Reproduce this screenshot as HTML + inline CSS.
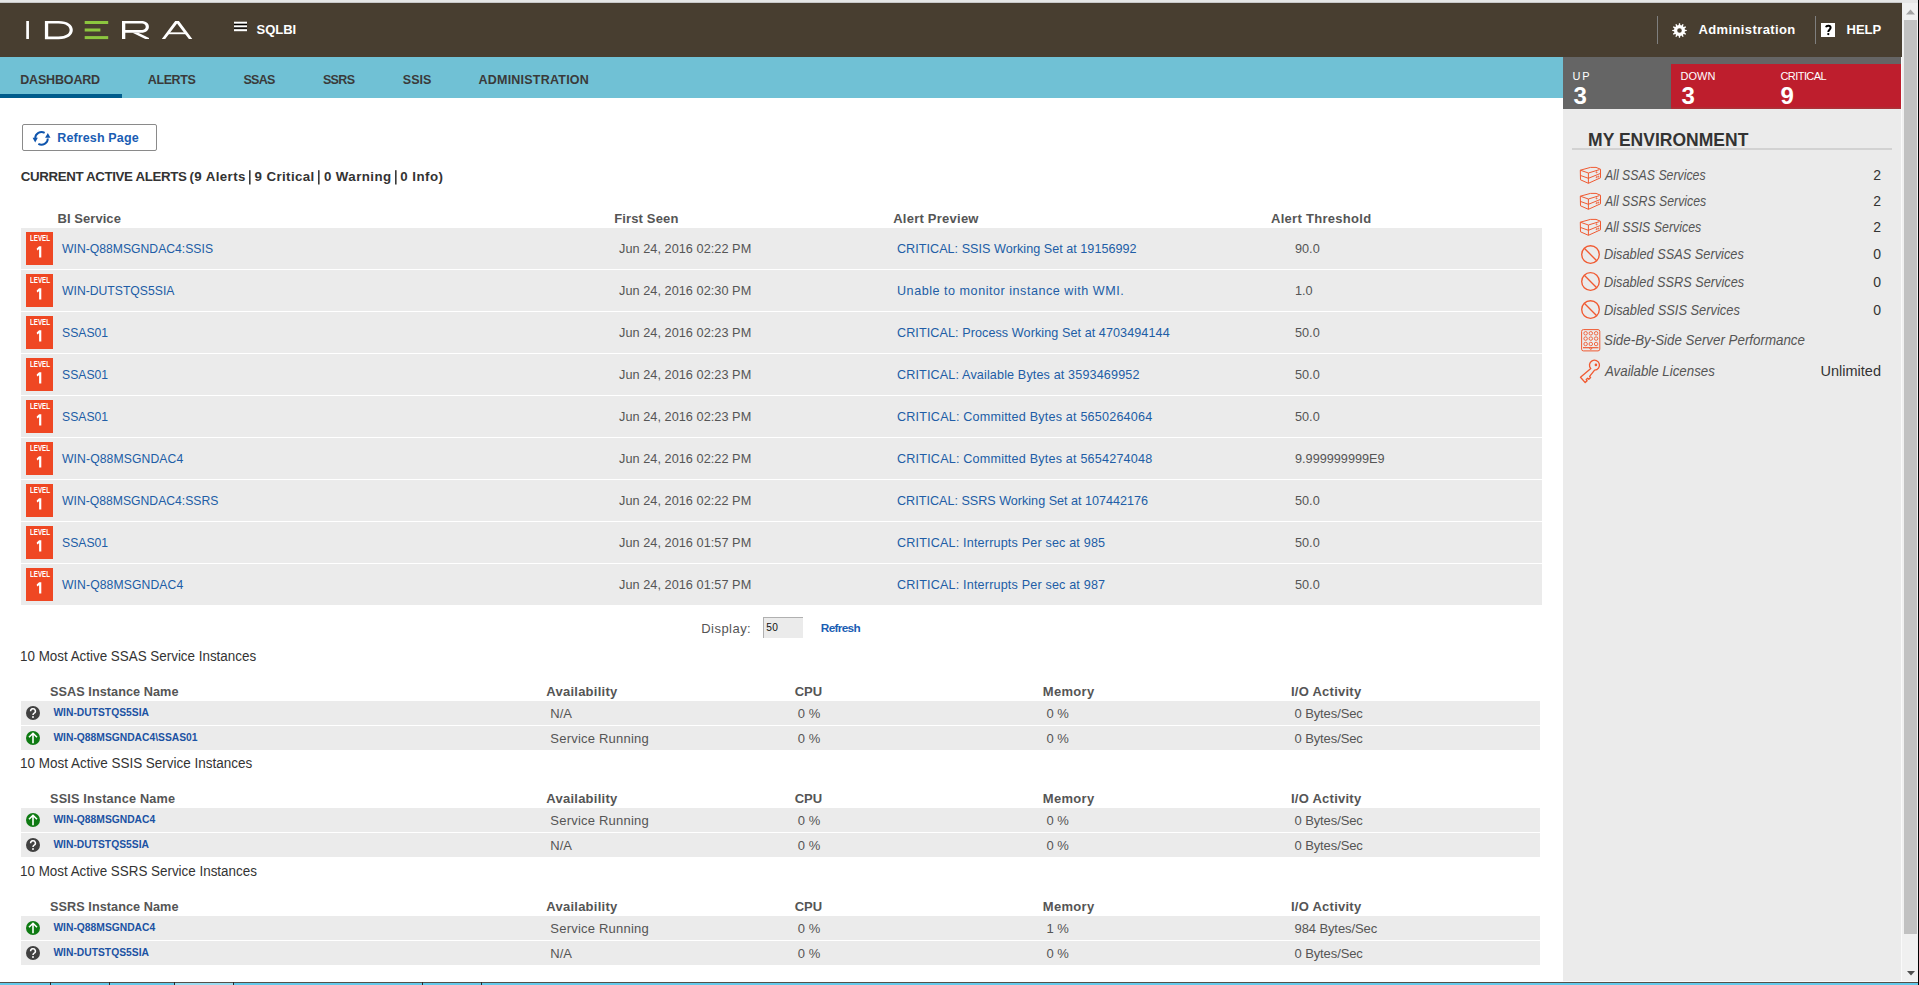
<!DOCTYPE html><html><head><meta charset="utf-8"><style>
html,body{margin:0;padding:0;width:1919px;height:985px;overflow:hidden;background:#fff;font-family:"Liberation Sans",sans-serif;}
.t{position:absolute;white-space:nowrap;line-height:1;}
.r{position:absolute;}
svg{position:absolute;}
</style></head><body>
<div class="r" style="left:0px;top:0px;width:1919px;height:3px;background:#e6e6e6;"></div>
<div class="r" style="left:0px;top:2px;width:1902px;height:1px;background:#c8c8c8;"></div>
<div class="r" style="left:0px;top:3px;width:1902px;height:54px;background:#483e30;"></div>
<svg style="left:20px;top:15px" width="180" height="30" viewBox="20 15 180 30">
<g fill="none" stroke="#fff" stroke-width="2.7">
<line x1="27.6" y1="21" x2="27.6" y2="39"/>
</g>
<path fill="#fff" fill-rule="evenodd" d="M44.9 21 H58.5 C68 21 72.8 25 72.8 30.05 C72.8 35.1 68 39.15 58.5 39.15 H44.9 Z M48.2 23.55 H58.5 C66 23.55 69.6 26.4 69.6 30.05 C69.6 33.7 66 36.5 58.5 36.5 H48.2 Z"/>
<path fill="#fff" fill-rule="evenodd" d="M122 21 H141 C146.5 21 148.9 23.5 148.9 26.8 C148.9 30.1 146.5 32.8 141 32.8 H125.3 V39.1 H122 Z M125.3 23.6 H141 C144.5 23.6 145.7 25 145.7 26.8 C145.7 28.6 144.5 30.1 141 30.1 H125.3 Z"/>
<path fill="#fff" d="M132.5 32.7 L138.3 32.7 L149 37.9 L149 39.1 L145.3 39.1 Z"/>
<path fill="#fff" d="M161.8 39.1 L175.2 21 L178.9 21 L192.3 39.1 L188.9 39.1 L177.05 23.4 L165.2 39.1 Z"/>
<rect fill="#fff" x="168" y="32.35" width="18" height="1.85"/>
<g fill="#8cc63f">
<rect x="84.7" y="21" width="23.5" height="3"/>
<rect x="84.7" y="28.5" width="15.7" height="3"/>
<rect x="84.7" y="36.1" width="23.5" height="3"/>
</g>
</svg>
<svg style="left:234px;top:20px" width="13" height="13" viewBox="0 20 13 13"><rect x="0" y="21.7" width="13" height="2.1" fill="#fff"/><rect x="0" y="23.8" width="13" height="1.2" fill="#000"/><rect x="0" y="25.4" width="13" height="2.1" fill="#fff"/><rect x="0" y="27.5" width="13" height="1.2" fill="#000"/><rect x="0" y="29.2" width="13" height="2" fill="#fff"/></svg>
<div class="t" style="left:256.50px;top:23.00px;font-size:13px;color:#fff;font-weight:bold;font-style:normal;letter-spacing:0.000px;">SQLBI</div>
<div class="r" style="left:1657px;top:16px;width:1px;height:28px;background:#7f7f7f;"></div>
<div class="r" style="left:1815px;top:16px;width:1px;height:28px;background:#7f7f7f;"></div>
<svg style="left:1672px;top:22.5px" width="15" height="15" viewBox="0 0 15 15"><path fill="#fff" fill-rule="evenodd" d="M12.94 6.68 L14.78 6.91 L14.78 8.09 L12.94 8.32 L12.62 9.51 L14.10 10.63 L13.51 11.65 L11.80 10.93 L10.93 11.80 L11.65 13.51 L10.63 14.10 L9.51 12.62 L8.32 12.94 L8.09 14.78 L6.91 14.78 L6.68 12.94 L5.49 12.62 L4.37 14.10 L3.35 13.51 L4.07 11.80 L3.20 10.93 L1.49 11.65 L0.90 10.63 L2.38 9.51 L2.06 8.32 L0.22 8.09 L0.22 6.91 L2.06 6.68 L2.38 5.49 L0.90 4.37 L1.49 3.35 L3.20 4.07 L4.07 3.20 L3.35 1.49 L4.37 0.90 L5.49 2.38 L6.68 2.06 L6.91 0.22 L8.09 0.22 L8.32 2.06 L9.51 2.38 L10.63 0.90 L11.65 1.49 L10.93 3.20 L11.80 4.07 L13.51 3.35 L14.10 4.37 L12.62 5.49Z M9.80 7.5 A2.3 2.3 0 1 0 5.20 7.5 A2.3 2.3 0 1 0 9.80 7.5Z"/></svg>
<div class="t" style="left:1698.50px;top:23.00px;font-size:13px;color:#fff;font-weight:bold;font-style:normal;letter-spacing:0.385px;">Administration</div>
<div class="r" style="left:1821px;top:23px;width:14px;height:14px;background:#fff;"></div>
<svg style="left:1821px;top:23px" width="14" height="14" viewBox="0 0 14 14"><path d="M5 4.3 C5.4 2.3 9.6 2.2 9.6 4.7 C9.6 6.6 7.3 6.9 7.3 8.9" fill="none" stroke="#000" stroke-width="2"/><circle cx="7.3" cy="11.1" r="1.15" fill="#000"/></svg>
<div class="t" style="left:1846.50px;top:23.00px;font-size:13px;color:#fff;font-weight:bold;font-style:normal;letter-spacing:0.000px;">HELP</div>
<div class="r" style="left:0px;top:57px;width:1563px;height:41px;background:#70c1d5;"></div>
<div class="r" style="left:0px;top:94px;width:122px;height:4px;background:#005c8c;"></div>
<div class="t" style="left:20.20px;top:74.42px;font-size:12.5px;color:#3a3a3a;font-weight:bold;font-style:normal;letter-spacing:-0.162px;">DASHBOARD</div>
<div class="t" style="left:147.80px;top:74.42px;font-size:12.5px;color:#3a3a3a;font-weight:bold;font-style:normal;letter-spacing:-0.400px;">ALERTS</div>
<div class="t" style="left:243.40px;top:74.42px;font-size:12.5px;color:#3a3a3a;font-weight:bold;font-style:normal;letter-spacing:-0.667px;">SSAS</div>
<div class="t" style="left:322.90px;top:74.42px;font-size:12.5px;color:#3a3a3a;font-weight:bold;font-style:normal;letter-spacing:-0.633px;">SSRS</div>
<div class="t" style="left:402.80px;top:74.42px;font-size:12.5px;color:#3a3a3a;font-weight:bold;font-style:normal;letter-spacing:0.033px;">SSIS</div>
<div class="t" style="left:478.50px;top:74.42px;font-size:12.5px;color:#3a3a3a;font-weight:bold;font-style:normal;letter-spacing:0.223px;">ADMINISTRATION</div>
<div class="r" style="left:1563px;top:57px;width:338px;height:924px;background:#ebebeb;"></div>
<div class="r" style="left:1901px;top:57px;width:1px;height:924px;background:#fafafa;"></div>
<div class="r" style="left:1563px;top:981px;width:355px;height:1px;background:#fafafa;"></div>
<div class="r" style="left:1563px;top:57px;width:338px;height:52px;background:#656565;"></div>
<div class="r" style="left:1671px;top:64px;width:230px;height:45px;background:#be1e2d;"></div>
<div class="r" style="left:1671px;top:107px;width:230px;height:2px;background:linear-gradient(#b5262f,#a8353c);"></div>
<div class="t" style="left:1572.50px;top:70.69px;font-size:11px;color:#fff;font-weight:normal;font-style:normal;letter-spacing:1.750px;">UP</div>
<div class="t" style="left:1680.50px;top:70.69px;font-size:11px;color:#fff;font-weight:normal;font-style:normal;letter-spacing:0.000px;">DOWN</div>
<div class="t" style="left:1780.50px;top:70.69px;font-size:11px;color:#fff;font-weight:normal;font-style:normal;letter-spacing:-0.571px;">CRITICAL</div>
<div class="t" style="left:1573.5px;top:83.68px;font-size:24px;color:#fff;font-weight:bold;font-style:normal;letter-spacing:0px;">3</div>
<div class="t" style="left:1681.5px;top:83.68px;font-size:24px;color:#fff;font-weight:bold;font-style:normal;letter-spacing:0px;">3</div>
<div class="t" style="left:1780.5px;top:83.68px;font-size:24px;color:#fff;font-weight:bold;font-style:normal;letter-spacing:0px;">9</div>
<div class="t" style="left:1588.10px;top:132.19px;font-size:17.5px;color:#333;font-weight:bold;font-style:normal;letter-spacing:0.015px;">MY ENVIRONMENT</div>
<div class="r" style="left:1572px;top:148px;width:320px;height:2px;background:#d2d2d2;"></div>
<div class="t" style="left:1605.34px;top:168.15px;font-size:14px;color:#555;font-weight:normal;font-style:italic;transform:scaleX(0.8798);transform-origin:0 0;">All SSAS Services</div>
<div class="t" style="right:38px;top:168.15px;font-size:14px;color:#333">2</div>
<svg style="left:1576px;top:162px" width="30" height="26" viewBox="0 0 30 26"><g fill="none" stroke="#f05a32" stroke-width="1" stroke-linejoin="round">
<path d="M4.3 8.2 L14.5 5.4 L20 5.4 L24.5 7.2 L24.5 15.8 L12.4 21.3 L4.5 17.8 Z"/><path d="M4.3 8.2 L12.4 11 L23.5 7.6"/><path d="M12.4 11 V21.3"/><path d="M4.3 13.4 L12.4 16.3 L24.5 11.4"/>
<circle cx="20.6" cy="10.3" r=".5"/><circle cx="20.6" cy="15.2" r=".5"/><circle cx="22.3" cy="14.6" r=".5"/></g></svg>
<div class="t" style="left:1605.34px;top:194.15px;font-size:14px;color:#555;font-weight:normal;font-style:italic;transform:scaleX(0.8791);transform-origin:0 0;">All SSRS Services</div>
<div class="t" style="right:38px;top:194.15px;font-size:14px;color:#333">2</div>
<svg style="left:1576px;top:188px" width="30" height="26" viewBox="0 0 30 26"><g fill="none" stroke="#f05a32" stroke-width="1" stroke-linejoin="round">
<path d="M4.3 8.2 L14.5 5.4 L20 5.4 L24.5 7.2 L24.5 15.8 L12.4 21.3 L4.5 17.8 Z"/><path d="M4.3 8.2 L12.4 11 L23.5 7.6"/><path d="M12.4 11 V21.3"/><path d="M4.3 13.4 L12.4 16.3 L24.5 11.4"/>
<circle cx="20.6" cy="10.3" r=".5"/><circle cx="20.6" cy="15.2" r=".5"/><circle cx="22.3" cy="14.6" r=".5"/></g></svg>
<div class="t" style="left:1605.34px;top:220.15px;font-size:14px;color:#555;font-weight:normal;font-style:italic;transform:scaleX(0.8835);transform-origin:0 0;">All SSIS Services</div>
<div class="t" style="right:38px;top:220.15px;font-size:14px;color:#333">2</div>
<svg style="left:1576px;top:214px" width="30" height="26" viewBox="0 0 30 26"><g fill="none" stroke="#f05a32" stroke-width="1" stroke-linejoin="round">
<path d="M4.3 8.2 L14.5 5.4 L20 5.4 L24.5 7.2 L24.5 15.8 L12.4 21.3 L4.5 17.8 Z"/><path d="M4.3 8.2 L12.4 11 L23.5 7.6"/><path d="M12.4 11 V21.3"/><path d="M4.3 13.4 L12.4 16.3 L24.5 11.4"/>
<circle cx="20.6" cy="10.3" r=".5"/><circle cx="20.6" cy="15.2" r=".5"/><circle cx="22.3" cy="14.6" r=".5"/></g></svg>
<div class="t" style="left:1604.44px;top:247.15px;font-size:14px;color:#555;font-weight:normal;font-style:italic;transform:scaleX(0.9118);transform-origin:0 0;">Disabled SSAS Services</div>
<div class="t" style="right:38px;top:247.15px;font-size:14px;color:#333">0</div>
<svg style="left:1581px;top:244.5px" width="19" height="19" viewBox="0 0 19 19"><g fill="none" stroke="#f05a32" stroke-width="1.35"><circle cx="9.5" cy="9.5" r="8.8"/><line x1="3.3" y1="3.3" x2="15.7" y2="15.7"/></g></svg>
<div class="t" style="left:1604.45px;top:274.65px;font-size:14px;color:#555;font-weight:normal;font-style:italic;transform:scaleX(0.9092);transform-origin:0 0;">Disabled SSRS Services</div>
<div class="t" style="right:38px;top:274.65px;font-size:14px;color:#333">0</div>
<svg style="left:1581px;top:272.0px" width="19" height="19" viewBox="0 0 19 19"><g fill="none" stroke="#f05a32" stroke-width="1.35"><circle cx="9.5" cy="9.5" r="8.8"/><line x1="3.3" y1="3.3" x2="15.7" y2="15.7"/></g></svg>
<div class="t" style="left:1604.44px;top:302.65px;font-size:14px;color:#555;font-weight:normal;font-style:italic;transform:scaleX(0.9190);transform-origin:0 0;">Disabled SSIS Services</div>
<div class="t" style="right:38px;top:302.65px;font-size:14px;color:#333">0</div>
<svg style="left:1581px;top:300.0px" width="19" height="19" viewBox="0 0 19 19"><g fill="none" stroke="#f05a32" stroke-width="1.35"><circle cx="9.5" cy="9.5" r="8.8"/><line x1="3.3" y1="3.3" x2="15.7" y2="15.7"/></g></svg>
<div class="t" style="left:1604.42px;top:332.65px;font-size:14px;color:#555;font-weight:normal;font-style:italic;transform:scaleX(0.9529);transform-origin:0 0;">Side-By-Side Server Performance</div>
<svg style="left:1581px;top:328.5px" width="20" height="23" viewBox="0 0 20 23"><g fill="none" stroke="#f05a32" stroke-width="1"><rect x="0.6" y="0.6" width="18.2" height="21.3" rx="1.8"/><g stroke-width="0.9"><circle cx="4.6" cy="4.3" r="1.75"/><circle cx="4.6" cy="9.6" r="1.75"/><circle cx="4.6" cy="15.0" r="1.75"/><circle cx="9.8" cy="4.3" r="1.75"/><circle cx="9.8" cy="9.6" r="1.75"/><circle cx="9.8" cy="15.0" r="1.75"/><circle cx="15.1" cy="4.3" r="1.75"/><circle cx="15.1" cy="9.6" r="1.75"/><circle cx="15.1" cy="15.0" r="1.75"/></g><line x1="2" y1="18.7" x2="17.5" y2="18.7" stroke-width="1.2"/><path d="M8.3 18.8 L9.8 20.6 L11.3 18.8"/></g></svg>
<div class="t" style="left:1605.37px;top:363.65px;font-size:14px;color:#555;font-weight:normal;font-style:italic;transform:scaleX(0.9491);transform-origin:0 0;">Available Licenses</div>
<div class="t" style="right:38px;top:364.23px;font-size:14.5px;color:#333">Unlimited</div>
<svg style="left:1576px;top:355.0px" width="26" height="30" viewBox="0 0 26 30"><g fill="none" stroke="#f05a32" stroke-width="1.35" stroke-linejoin="round">
<path d="M14.8 13.6 A5 5 0 1 1 18.6 15.2 L13.6 21.4 L14.6 22.6 L12.8 24.3 L11.7 23.3 L10.2 24.6 L11.1 25.7 L9.2 27.6 L4.5 22.3 Z"/>
</g><circle cx="19.9" cy="9.9" r="1.3" fill="#f05a32"/></svg>
<div class="r" style="left:1902px;top:3px;width:16px;height:978px;background:#f0f0f0;"></div>
<div class="r" style="left:1918px;top:0px;width:1px;height:985px;background:#000;"></div>
<div class="r" style="left:1904px;top:20px;width:13px;height:914px;background:#c1c1c1;"></div>
<svg style="left:1906px;top:9px" width="9" height="6" viewBox="0 0 9 6"><path d="M0 5.5 L4.5 0.5 L9 5.5Z" fill="#a3a3a3"/></svg>
<svg style="left:1906.5px;top:971px" width="8" height="5" viewBox="0 0 8 5"><path d="M0 0 L4 4.5 L8 0Z" fill="#505050"/></svg>
<div class="r" style="left:22px;top:124px;width:133px;height:25px;border:1px solid #8a8a8a;border-radius:2px;background:#fff"></div>
<svg style="left:28px;top:126px" width="26" height="24" viewBox="0 0 26 24"><g fill="none" stroke="#0f55ad" stroke-width="1.9">
<path d="M7.2 12.4 A6.3 6.3 0 0 1 16.65 6.94"/><path d="M19.8 12.4 A6.3 6.3 0 0 1 10.35 17.86"/></g>
<path d="M4.6 11.8 L9.8 11.8 L7.2 16.5 Z" fill="#0f55ad"/><path d="M17.1 11.8 L22.5 11.8 L19.8 6.9 Z" fill="#0f55ad"/></svg>
<div class="t" style="left:57.25px;top:131.92px;font-size:12.5px;color:#1a5db3;font-weight:bold;font-style:normal;letter-spacing:0.132px;">Refresh Page</div>
<div class="t" style="left:20.80px;top:169.74px;font-size:13.3px;color:#333;font-weight:bold;font-style:normal;letter-spacing:-0.370px;">CURRENT ACTIVE ALERTS</div>
<div class="t" style="left:189.40px;top:169.74px;font-size:13.3px;color:#333;font-weight:bold;font-style:normal;letter-spacing:0.412px;">(9 Alerts</div>
<div class="t" style="left:254.50px;top:169.74px;font-size:13.3px;color:#333;font-weight:bold;font-style:normal;letter-spacing:0.400px;">9 Critical</div>
<div class="t" style="left:323.90px;top:169.74px;font-size:13.3px;color:#333;font-weight:bold;font-style:normal;letter-spacing:0.425px;">0 Warning</div>
<div class="t" style="left:400.20px;top:169.74px;font-size:13.3px;color:#333;font-weight:bold;font-style:normal;letter-spacing:0.483px;">0 Info)</div>
<svg style="left:248px;top:169px" width="4" height="17"><rect x="1" y="1.2" width="1.6" height="14.3" fill="#3a3a3a"/></svg>
<svg style="left:317px;top:169px" width="4" height="17"><rect x="1" y="1.2" width="1.6" height="14.3" fill="#3a3a3a"/></svg>
<svg style="left:393.5px;top:169px" width="4" height="17"><rect x="1" y="1.2" width="1.6" height="14.3" fill="#3a3a3a"/></svg>
<div class="t" style="left:57.50px;top:212.00px;font-size:13px;color:#555;font-weight:bold;font-style:normal;letter-spacing:0.056px;">BI Service</div>
<div class="t" style="left:614.20px;top:212.00px;font-size:13px;color:#555;font-weight:bold;font-style:normal;letter-spacing:0.144px;">First Seen</div>
<div class="t" style="left:893.20px;top:212.00px;font-size:13px;color:#555;font-weight:bold;font-style:normal;letter-spacing:0.242px;">Alert Preview</div>
<div class="t" style="left:1271.00px;top:212.00px;font-size:13px;color:#555;font-weight:bold;font-style:normal;letter-spacing:0.286px;">Alert Threshold</div>
<div class="r" style="left:21px;top:228px;width:1521px;height:41px;background:#ebebeb;"></div>
<div class="r" style="left:26px;top:232px;width:27px;height:33px;background:#ef4723;"></div>
<div class="t" style="left:30px;top:234.00px;font-size:8.5px;color:#fff;font-weight:bold;font-style:normal;letter-spacing:0px;transform:scaleX(0.73);transform-origin:0 0;">LEVEL</div>
<svg style="left:34px;top:244px" width="10" height="14" viewBox="0 0 10 14"><path fill="#fff" d="M5.1 2.2 H7.3 V13.6 H5.1 V5.2 L3.1 6.6 L2.7 4.6 Z"/></svg>
<div class="t" style="left:62px;top:242.97px;font-size:12.2px;color:#215da6;font-weight:normal;font-style:normal;letter-spacing:0px;">WIN-Q88MSGNDAC4:SSIS</div>
<div class="t" style="left:619px;top:242.55px;font-size:12.7px;color:#555;font-weight:normal;font-style:normal;letter-spacing:0.05px;">Jun 24, 2016 02:22 PM</div>
<div class="t" style="left:897px;top:242.63px;font-size:12.6px;color:#215da6;font-weight:normal;font-style:normal;letter-spacing:0.03px;">CRITICAL: SSIS Working Set at 19156992</div>
<div class="t" style="left:1295px;top:242.55px;font-size:12.7px;color:#555;font-weight:normal;font-style:normal;letter-spacing:0px;">90.0</div>
<div class="r" style="left:21px;top:270px;width:1521px;height:41px;background:#ebebeb;"></div>
<div class="r" style="left:26px;top:274px;width:27px;height:33px;background:#ef4723;"></div>
<div class="t" style="left:30px;top:276.00px;font-size:8.5px;color:#fff;font-weight:bold;font-style:normal;letter-spacing:0px;transform:scaleX(0.73);transform-origin:0 0;">LEVEL</div>
<svg style="left:34px;top:286px" width="10" height="14" viewBox="0 0 10 14"><path fill="#fff" d="M5.1 2.2 H7.3 V13.6 H5.1 V5.2 L3.1 6.6 L2.7 4.6 Z"/></svg>
<div class="t" style="left:62px;top:284.97px;font-size:12.2px;color:#215da6;font-weight:normal;font-style:normal;letter-spacing:0px;">WIN-DUTSTQS5SIA</div>
<div class="t" style="left:619px;top:284.55px;font-size:12.7px;color:#555;font-weight:normal;font-style:normal;letter-spacing:0.05px;">Jun 24, 2016 02:30 PM</div>
<div class="t" style="left:897px;top:284.63px;font-size:12.6px;color:#215da6;font-weight:normal;font-style:normal;letter-spacing:0.52px;">Unable to monitor instance with WMI.</div>
<div class="t" style="left:1295px;top:284.55px;font-size:12.7px;color:#555;font-weight:normal;font-style:normal;letter-spacing:0px;">1.0</div>
<div class="r" style="left:21px;top:312px;width:1521px;height:41px;background:#ebebeb;"></div>
<div class="r" style="left:26px;top:316px;width:27px;height:33px;background:#ef4723;"></div>
<div class="t" style="left:30px;top:318.00px;font-size:8.5px;color:#fff;font-weight:bold;font-style:normal;letter-spacing:0px;transform:scaleX(0.73);transform-origin:0 0;">LEVEL</div>
<svg style="left:34px;top:328px" width="10" height="14" viewBox="0 0 10 14"><path fill="#fff" d="M5.1 2.2 H7.3 V13.6 H5.1 V5.2 L3.1 6.6 L2.7 4.6 Z"/></svg>
<div class="t" style="left:62px;top:326.97px;font-size:12.2px;color:#215da6;font-weight:normal;font-style:normal;letter-spacing:0px;">SSAS01</div>
<div class="t" style="left:619px;top:326.55px;font-size:12.7px;color:#555;font-weight:normal;font-style:normal;letter-spacing:0.05px;">Jun 24, 2016 02:23 PM</div>
<div class="t" style="left:897px;top:326.63px;font-size:12.6px;color:#215da6;font-weight:normal;font-style:normal;letter-spacing:0.08px;">CRITICAL: Process Working Set at 4703494144</div>
<div class="t" style="left:1295px;top:326.55px;font-size:12.7px;color:#555;font-weight:normal;font-style:normal;letter-spacing:0px;">50.0</div>
<div class="r" style="left:21px;top:354px;width:1521px;height:41px;background:#ebebeb;"></div>
<div class="r" style="left:26px;top:358px;width:27px;height:33px;background:#ef4723;"></div>
<div class="t" style="left:30px;top:360.00px;font-size:8.5px;color:#fff;font-weight:bold;font-style:normal;letter-spacing:0px;transform:scaleX(0.73);transform-origin:0 0;">LEVEL</div>
<svg style="left:34px;top:370px" width="10" height="14" viewBox="0 0 10 14"><path fill="#fff" d="M5.1 2.2 H7.3 V13.6 H5.1 V5.2 L3.1 6.6 L2.7 4.6 Z"/></svg>
<div class="t" style="left:62px;top:368.97px;font-size:12.2px;color:#215da6;font-weight:normal;font-style:normal;letter-spacing:0px;">SSAS01</div>
<div class="t" style="left:619px;top:368.55px;font-size:12.7px;color:#555;font-weight:normal;font-style:normal;letter-spacing:0.05px;">Jun 24, 2016 02:23 PM</div>
<div class="t" style="left:897px;top:368.63px;font-size:12.6px;color:#215da6;font-weight:normal;font-style:normal;letter-spacing:0.14px;">CRITICAL: Available Bytes at 3593469952</div>
<div class="t" style="left:1295px;top:368.55px;font-size:12.7px;color:#555;font-weight:normal;font-style:normal;letter-spacing:0px;">50.0</div>
<div class="r" style="left:21px;top:396px;width:1521px;height:41px;background:#ebebeb;"></div>
<div class="r" style="left:26px;top:400px;width:27px;height:33px;background:#ef4723;"></div>
<div class="t" style="left:30px;top:402.00px;font-size:8.5px;color:#fff;font-weight:bold;font-style:normal;letter-spacing:0px;transform:scaleX(0.73);transform-origin:0 0;">LEVEL</div>
<svg style="left:34px;top:412px" width="10" height="14" viewBox="0 0 10 14"><path fill="#fff" d="M5.1 2.2 H7.3 V13.6 H5.1 V5.2 L3.1 6.6 L2.7 4.6 Z"/></svg>
<div class="t" style="left:62px;top:410.97px;font-size:12.2px;color:#215da6;font-weight:normal;font-style:normal;letter-spacing:0px;">SSAS01</div>
<div class="t" style="left:619px;top:410.55px;font-size:12.7px;color:#555;font-weight:normal;font-style:normal;letter-spacing:0.05px;">Jun 24, 2016 02:23 PM</div>
<div class="t" style="left:897px;top:410.63px;font-size:12.6px;color:#215da6;font-weight:normal;font-style:normal;letter-spacing:0.195px;">CRITICAL: Committed Bytes at 5650264064</div>
<div class="t" style="left:1295px;top:410.55px;font-size:12.7px;color:#555;font-weight:normal;font-style:normal;letter-spacing:0px;">50.0</div>
<div class="r" style="left:21px;top:438px;width:1521px;height:41px;background:#ebebeb;"></div>
<div class="r" style="left:26px;top:442px;width:27px;height:33px;background:#ef4723;"></div>
<div class="t" style="left:30px;top:444.00px;font-size:8.5px;color:#fff;font-weight:bold;font-style:normal;letter-spacing:0px;transform:scaleX(0.73);transform-origin:0 0;">LEVEL</div>
<svg style="left:34px;top:454px" width="10" height="14" viewBox="0 0 10 14"><path fill="#fff" d="M5.1 2.2 H7.3 V13.6 H5.1 V5.2 L3.1 6.6 L2.7 4.6 Z"/></svg>
<div class="t" style="left:62px;top:452.97px;font-size:12.2px;color:#215da6;font-weight:normal;font-style:normal;letter-spacing:0.1px;">WIN-Q88MSGNDAC4</div>
<div class="t" style="left:619px;top:452.55px;font-size:12.7px;color:#555;font-weight:normal;font-style:normal;letter-spacing:0.05px;">Jun 24, 2016 02:22 PM</div>
<div class="t" style="left:897px;top:452.63px;font-size:12.6px;color:#215da6;font-weight:normal;font-style:normal;letter-spacing:0.195px;">CRITICAL: Committed Bytes at 5654274048</div>
<div class="t" style="left:1295px;top:452.55px;font-size:12.7px;color:#555;font-weight:normal;font-style:normal;letter-spacing:0px;">9.999999999E9</div>
<div class="r" style="left:21px;top:480px;width:1521px;height:41px;background:#ebebeb;"></div>
<div class="r" style="left:26px;top:484px;width:27px;height:33px;background:#ef4723;"></div>
<div class="t" style="left:30px;top:486.00px;font-size:8.5px;color:#fff;font-weight:bold;font-style:normal;letter-spacing:0px;transform:scaleX(0.73);transform-origin:0 0;">LEVEL</div>
<svg style="left:34px;top:496px" width="10" height="14" viewBox="0 0 10 14"><path fill="#fff" d="M5.1 2.2 H7.3 V13.6 H5.1 V5.2 L3.1 6.6 L2.7 4.6 Z"/></svg>
<div class="t" style="left:62px;top:494.97px;font-size:12.2px;color:#215da6;font-weight:normal;font-style:normal;letter-spacing:0px;">WIN-Q88MSGNDAC4:SSRS</div>
<div class="t" style="left:619px;top:494.55px;font-size:12.7px;color:#555;font-weight:normal;font-style:normal;letter-spacing:0.05px;">Jun 24, 2016 02:22 PM</div>
<div class="t" style="left:897px;top:494.63px;font-size:12.6px;color:#215da6;font-weight:normal;font-style:normal;letter-spacing:0px;">CRITICAL: SSRS Working Set at 107442176</div>
<div class="t" style="left:1295px;top:494.55px;font-size:12.7px;color:#555;font-weight:normal;font-style:normal;letter-spacing:0px;">50.0</div>
<div class="r" style="left:21px;top:522px;width:1521px;height:41px;background:#ebebeb;"></div>
<div class="r" style="left:26px;top:526px;width:27px;height:33px;background:#ef4723;"></div>
<div class="t" style="left:30px;top:528.00px;font-size:8.5px;color:#fff;font-weight:bold;font-style:normal;letter-spacing:0px;transform:scaleX(0.73);transform-origin:0 0;">LEVEL</div>
<svg style="left:34px;top:538px" width="10" height="14" viewBox="0 0 10 14"><path fill="#fff" d="M5.1 2.2 H7.3 V13.6 H5.1 V5.2 L3.1 6.6 L2.7 4.6 Z"/></svg>
<div class="t" style="left:62px;top:536.97px;font-size:12.2px;color:#215da6;font-weight:normal;font-style:normal;letter-spacing:0px;">SSAS01</div>
<div class="t" style="left:619px;top:536.55px;font-size:12.7px;color:#555;font-weight:normal;font-style:normal;letter-spacing:0.05px;">Jun 24, 2016 01:57 PM</div>
<div class="t" style="left:897px;top:536.63px;font-size:12.6px;color:#215da6;font-weight:normal;font-style:normal;letter-spacing:0.17px;">CRITICAL: Interrupts Per sec at 985</div>
<div class="t" style="left:1295px;top:536.55px;font-size:12.7px;color:#555;font-weight:normal;font-style:normal;letter-spacing:0px;">50.0</div>
<div class="r" style="left:21px;top:564px;width:1521px;height:41px;background:#ebebeb;"></div>
<div class="r" style="left:26px;top:568px;width:27px;height:33px;background:#ef4723;"></div>
<div class="t" style="left:30px;top:570.00px;font-size:8.5px;color:#fff;font-weight:bold;font-style:normal;letter-spacing:0px;transform:scaleX(0.73);transform-origin:0 0;">LEVEL</div>
<svg style="left:34px;top:580px" width="10" height="14" viewBox="0 0 10 14"><path fill="#fff" d="M5.1 2.2 H7.3 V13.6 H5.1 V5.2 L3.1 6.6 L2.7 4.6 Z"/></svg>
<div class="t" style="left:62px;top:578.97px;font-size:12.2px;color:#215da6;font-weight:normal;font-style:normal;letter-spacing:0.1px;">WIN-Q88MSGNDAC4</div>
<div class="t" style="left:619px;top:578.55px;font-size:12.7px;color:#555;font-weight:normal;font-style:normal;letter-spacing:0.05px;">Jun 24, 2016 01:57 PM</div>
<div class="t" style="left:897px;top:578.63px;font-size:12.6px;color:#215da6;font-weight:normal;font-style:normal;letter-spacing:0.17px;">CRITICAL: Interrupts Per sec at 987</div>
<div class="t" style="left:1295px;top:578.55px;font-size:12.7px;color:#555;font-weight:normal;font-style:normal;letter-spacing:0px;">50.0</div>
<div class="t" style="left:701.20px;top:621.50px;font-size:13px;color:#555;font-weight:normal;font-style:normal;letter-spacing:0.471px;">Display:</div>
<div class="r" style="left:763px;top:617px;width:39px;height:20px;background:#ebebeb;border-top:1px solid #b0b0b0;border-left:1px solid #b0b0b0"></div>
<div class="t" style="left:766.20px;top:622.97px;font-size:10.2px;color:#111;font-weight:normal;font-style:normal;letter-spacing:0.500px;">50</div>
<div class="t" style="left:820.80px;top:623.01px;font-size:11.8px;color:#1a5db3;font-weight:bold;font-style:normal;letter-spacing:-0.667px;">Refresh</div>
<div class="t" style="left:19.66px;top:649.25px;font-size:14px;color:#333;font-weight:normal;font-style:normal;transform:scaleX(0.9571);transform-origin:0 0;">10 Most Active SSAS Service Instances</div>
<div class="t" style="left:50px;top:685.65px;font-size:12.7px;color:#555;font-weight:bold;font-style:normal;letter-spacing:0.05px;">SSAS Instance Name</div>
<div class="t" style="left:546.3px;top:685.40px;font-size:13px;color:#555;font-weight:bold;font-style:normal;letter-spacing:0.25px;">Availability</div>
<div class="t" style="left:794.7px;top:685.40px;font-size:13px;color:#555;font-weight:bold;font-style:normal;letter-spacing:0px;">CPU</div>
<div class="t" style="left:1042.8px;top:685.40px;font-size:13px;color:#555;font-weight:bold;font-style:normal;letter-spacing:0.3px;">Memory</div>
<div class="t" style="left:1291px;top:685.40px;font-size:13px;color:#555;font-weight:bold;font-style:normal;letter-spacing:0.25px;">I/O Activity</div>
<div class="r" style="left:21px;top:701px;width:1519px;height:24px;background:#ebebeb;"></div>
<svg style="left:26px;top:706px" width="14" height="14" viewBox="0 0 14 14"><circle cx="7" cy="7" r="7" fill="#404040"/><path d="M4.6 5.2 A2.4 2.4 0 1 1 7.9 7.4 C7.2 7.8 7 8.2 7 9" fill="none" stroke="#fff" stroke-width="1.5"/><circle cx="7" cy="11" r="0.95" fill="#fff"/></svg>
<div class="t" style="left:53.4px;top:708.28px;font-size:10.3px;color:#1b52a3;font-weight:bold;font-style:normal;letter-spacing:0px;">WIN-DUTSTQS5SIA</div>
<div class="t" style="left:550.3px;top:707.30px;font-size:13px;color:#555;font-weight:normal;font-style:normal;letter-spacing:0px;">N/A</div>
<div class="t" style="left:797.8px;top:707.30px;font-size:13px;color:#555;font-weight:normal;font-style:normal;letter-spacing:0px;">0 %</div>
<div class="t" style="left:1046.5px;top:707.30px;font-size:13px;color:#555;font-weight:normal;font-style:normal;letter-spacing:0px;">0 %</div>
<div class="t" style="left:1294.5px;top:707.30px;font-size:13px;color:#555;font-weight:normal;font-style:normal;letter-spacing:-0.1px;">0 Bytes/Sec</div>
<div class="r" style="left:21px;top:726px;width:1519px;height:24px;background:#ebebeb;"></div>
<svg style="left:26px;top:731px" width="14" height="14" viewBox="0 0 14 14"><circle cx="7" cy="7" r="7" fill="#0e7a12"/><path d="M7 12.2 V2.5 M3 6.3 L7 2.3 L11 6.3" fill="none" stroke="#fff" stroke-width="1.6"/></svg>
<div class="t" style="left:53.4px;top:733.28px;font-size:10.3px;color:#1b52a3;font-weight:bold;font-style:normal;letter-spacing:0px;">WIN-Q88MSGNDAC4\SSAS01</div>
<div class="t" style="left:550.3px;top:732.30px;font-size:13px;color:#555;font-weight:normal;font-style:normal;letter-spacing:0.22px;">Service Running</div>
<div class="t" style="left:797.8px;top:732.30px;font-size:13px;color:#555;font-weight:normal;font-style:normal;letter-spacing:0px;">0 %</div>
<div class="t" style="left:1046.5px;top:732.30px;font-size:13px;color:#555;font-weight:normal;font-style:normal;letter-spacing:0px;">0 %</div>
<div class="t" style="left:1294.5px;top:732.30px;font-size:13px;color:#555;font-weight:normal;font-style:normal;letter-spacing:-0.1px;">0 Bytes/Sec</div>
<div class="t" style="left:19.66px;top:756.25px;font-size:14px;color:#333;font-weight:normal;font-style:normal;transform:scaleX(0.9628);transform-origin:0 0;">10 Most Active SSIS Service Instances</div>
<div class="t" style="left:50px;top:792.65px;font-size:12.7px;color:#555;font-weight:bold;font-style:normal;letter-spacing:0.18px;">SSIS Instance Name</div>
<div class="t" style="left:546.3px;top:792.40px;font-size:13px;color:#555;font-weight:bold;font-style:normal;letter-spacing:0.25px;">Availability</div>
<div class="t" style="left:794.7px;top:792.40px;font-size:13px;color:#555;font-weight:bold;font-style:normal;letter-spacing:0px;">CPU</div>
<div class="t" style="left:1042.8px;top:792.40px;font-size:13px;color:#555;font-weight:bold;font-style:normal;letter-spacing:0.3px;">Memory</div>
<div class="t" style="left:1291px;top:792.40px;font-size:13px;color:#555;font-weight:bold;font-style:normal;letter-spacing:0.25px;">I/O Activity</div>
<div class="r" style="left:21px;top:808px;width:1519px;height:24px;background:#ebebeb;"></div>
<svg style="left:26px;top:813px" width="14" height="14" viewBox="0 0 14 14"><circle cx="7" cy="7" r="7" fill="#0e7a12"/><path d="M7 12.2 V2.5 M3 6.3 L7 2.3 L11 6.3" fill="none" stroke="#fff" stroke-width="1.6"/></svg>
<div class="t" style="left:53.4px;top:815.28px;font-size:10.3px;color:#1b52a3;font-weight:bold;font-style:normal;letter-spacing:0px;">WIN-Q88MSGNDAC4</div>
<div class="t" style="left:550.3px;top:814.30px;font-size:13px;color:#555;font-weight:normal;font-style:normal;letter-spacing:0.22px;">Service Running</div>
<div class="t" style="left:797.8px;top:814.30px;font-size:13px;color:#555;font-weight:normal;font-style:normal;letter-spacing:0px;">0 %</div>
<div class="t" style="left:1046.5px;top:814.30px;font-size:13px;color:#555;font-weight:normal;font-style:normal;letter-spacing:0px;">0 %</div>
<div class="t" style="left:1294.5px;top:814.30px;font-size:13px;color:#555;font-weight:normal;font-style:normal;letter-spacing:-0.1px;">0 Bytes/Sec</div>
<div class="r" style="left:21px;top:833px;width:1519px;height:24px;background:#ebebeb;"></div>
<svg style="left:26px;top:838px" width="14" height="14" viewBox="0 0 14 14"><circle cx="7" cy="7" r="7" fill="#404040"/><path d="M4.6 5.2 A2.4 2.4 0 1 1 7.9 7.4 C7.2 7.8 7 8.2 7 9" fill="none" stroke="#fff" stroke-width="1.5"/><circle cx="7" cy="11" r="0.95" fill="#fff"/></svg>
<div class="t" style="left:53.4px;top:840.28px;font-size:10.3px;color:#1b52a3;font-weight:bold;font-style:normal;letter-spacing:0px;">WIN-DUTSTQS5SIA</div>
<div class="t" style="left:550.3px;top:839.30px;font-size:13px;color:#555;font-weight:normal;font-style:normal;letter-spacing:0px;">N/A</div>
<div class="t" style="left:797.8px;top:839.30px;font-size:13px;color:#555;font-weight:normal;font-style:normal;letter-spacing:0px;">0 %</div>
<div class="t" style="left:1046.5px;top:839.30px;font-size:13px;color:#555;font-weight:normal;font-style:normal;letter-spacing:0px;">0 %</div>
<div class="t" style="left:1294.5px;top:839.30px;font-size:13px;color:#555;font-weight:normal;font-style:normal;letter-spacing:-0.1px;">0 Bytes/Sec</div>
<div class="t" style="left:19.66px;top:864.25px;font-size:14px;color:#333;font-weight:normal;font-style:normal;transform:scaleX(0.9571);transform-origin:0 0;">10 Most Active SSRS Service Instances</div>
<div class="t" style="left:50px;top:900.65px;font-size:12.7px;color:#555;font-weight:bold;font-style:normal;letter-spacing:0.05px;">SSRS Instance Name</div>
<div class="t" style="left:546.3px;top:900.40px;font-size:13px;color:#555;font-weight:bold;font-style:normal;letter-spacing:0.25px;">Availability</div>
<div class="t" style="left:794.7px;top:900.40px;font-size:13px;color:#555;font-weight:bold;font-style:normal;letter-spacing:0px;">CPU</div>
<div class="t" style="left:1042.8px;top:900.40px;font-size:13px;color:#555;font-weight:bold;font-style:normal;letter-spacing:0.3px;">Memory</div>
<div class="t" style="left:1291px;top:900.40px;font-size:13px;color:#555;font-weight:bold;font-style:normal;letter-spacing:0.25px;">I/O Activity</div>
<div class="r" style="left:21px;top:916px;width:1519px;height:24px;background:#ebebeb;"></div>
<svg style="left:26px;top:921px" width="14" height="14" viewBox="0 0 14 14"><circle cx="7" cy="7" r="7" fill="#0e7a12"/><path d="M7 12.2 V2.5 M3 6.3 L7 2.3 L11 6.3" fill="none" stroke="#fff" stroke-width="1.6"/></svg>
<div class="t" style="left:53.4px;top:923.28px;font-size:10.3px;color:#1b52a3;font-weight:bold;font-style:normal;letter-spacing:0px;">WIN-Q88MSGNDAC4</div>
<div class="t" style="left:550.3px;top:922.30px;font-size:13px;color:#555;font-weight:normal;font-style:normal;letter-spacing:0.22px;">Service Running</div>
<div class="t" style="left:797.8px;top:922.30px;font-size:13px;color:#555;font-weight:normal;font-style:normal;letter-spacing:0px;">0 %</div>
<div class="t" style="left:1046.5px;top:922.30px;font-size:13px;color:#555;font-weight:normal;font-style:normal;letter-spacing:0px;">1 %</div>
<div class="t" style="left:1294.5px;top:922.30px;font-size:13px;color:#555;font-weight:normal;font-style:normal;letter-spacing:-0.1px;">984 Bytes/Sec</div>
<div class="r" style="left:21px;top:941px;width:1519px;height:24px;background:#ebebeb;"></div>
<svg style="left:26px;top:946px" width="14" height="14" viewBox="0 0 14 14"><circle cx="7" cy="7" r="7" fill="#404040"/><path d="M4.6 5.2 A2.4 2.4 0 1 1 7.9 7.4 C7.2 7.8 7 8.2 7 9" fill="none" stroke="#fff" stroke-width="1.5"/><circle cx="7" cy="11" r="0.95" fill="#fff"/></svg>
<div class="t" style="left:53.4px;top:948.28px;font-size:10.3px;color:#1b52a3;font-weight:bold;font-style:normal;letter-spacing:0px;">WIN-DUTSTQS5SIA</div>
<div class="t" style="left:550.3px;top:947.30px;font-size:13px;color:#555;font-weight:normal;font-style:normal;letter-spacing:0px;">N/A</div>
<div class="t" style="left:797.8px;top:947.30px;font-size:13px;color:#555;font-weight:normal;font-style:normal;letter-spacing:0px;">0 %</div>
<div class="t" style="left:1046.5px;top:947.30px;font-size:13px;color:#555;font-weight:normal;font-style:normal;letter-spacing:0px;">0 %</div>
<div class="t" style="left:1294.5px;top:947.30px;font-size:13px;color:#555;font-weight:normal;font-style:normal;letter-spacing:-0.1px;">0 Bytes/Sec</div>
<div class="r" style="left:0px;top:982px;width:1918px;height:1px;background:#554f48;"></div>
<div class="r" style="left:0px;top:983px;width:1918px;height:2px;background:#62c9ea;"></div>
<div class="r" style="left:50px;top:982px;width:1px;height:3px;background:#2a2a2a;"></div>
<div class="r" style="left:109px;top:982px;width:1px;height:3px;background:#2a2a2a;"></div>
<div class="r" style="left:174px;top:982px;width:1px;height:3px;background:#2a2a2a;"></div>
<div class="r" style="left:233px;top:982px;width:1px;height:3px;background:#2a2a2a;"></div>
<div class="r" style="left:422px;top:982px;width:1px;height:3px;background:#2a2a2a;"></div>
<div class="r" style="left:481px;top:982px;width:1px;height:3px;background:#2a2a2a;"></div>
<div class="r" style="left:175px;top:983px;width:58px;height:2px;background:#9adcf0;"></div>
</body></html>
